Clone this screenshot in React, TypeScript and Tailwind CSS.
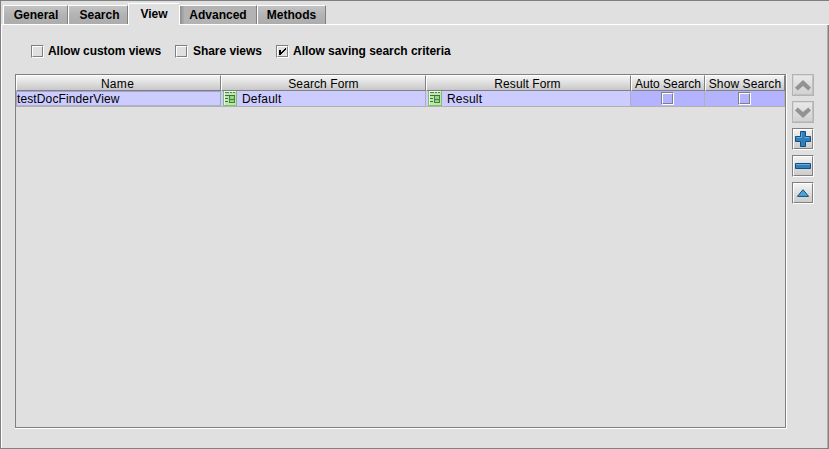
import React from "react";

function Check({ label, checked, className, gap }: { label: string; checked?: boolean; className: string; gap: string }) {
  return (
    <label className={`flex h-[14px] items-center whitespace-nowrap font-bold ${className}`}>
      <span className={`h-[13px] w-[13px] shrink-0 border border-t-[#808080] border-l-[#808080] border-r-white border-b-white ${gap}`}>
        <span className="block h-[11px] w-[11px] border border-t-white border-l-white border-r-[#808080] border-b-[#808080]">
          {checked && (
            <svg className="block" width="9" height="9" viewBox="0 0 9 9" shapeRendering="crispEdges">
              <path d="M1 3h2v2h1v-1h1v-1h1v-1h1v-1h1v2h-1v1h-1v1h-1v1h-1v1h-1v1h-2z" fill="#000" />
            </svg>
          )}
        </span>
      </span>
      <span>{label}</span>
    </label>
  );
}

function CellCheck() {
  return (
    <span className="block h-[13px] w-[13px] border border-t-[#808080] border-l-[#808080] border-r-white border-b-white">
      <span className="block h-[11px] w-[11px] border border-t-white border-l-white border-r-[#808080] border-b-[#808080]" />
    </span>
  );
}

function FormIcon() {
  return (
    <svg className="mr-[5px] ml-[2px] block shrink-0" width="14" height="15" viewBox="0 0 14 15" shapeRendering="crispEdges">
      <path d="M0 0h14v15H0z" fill="#86bd76" />
      <path d="M1 0h12v14H1z" fill="#b9eaa9" />
      <path d="M1 0h1v14H1zM1 0h12v1H1z" fill="#e6fbdf" />
      <path d="M2 1h4v1H2zM7 1h2v1H7zM10 1h2v1h-2z" fill="#5d7a58" />
      <path d="M2 4h10v1H2zM2 7h3v1H2zM2 10h3v1H2z" fill="#456d42" />
      <path d="M6 5h1v7H6zM11 5h1v7h-1zM6 8h6v1H6zM6 11h6v1H6z" fill="#478043" />
      <path d="M7 5h4v3H7zM7 9h4v2H7z" fill="#97d386" />
    </svg>
  );
}

function Tab({ label, className }: { label: string; className: string }) {
  return (
    <div className={`flex h-[19px] items-center justify-center border-t border-l border-t-white border-l-white border-r border-r-[#808080] font-bold ${className}`}>
      <span className="whitespace-nowrap">{label}</span>
    </div>
  );
}

function Head({ label, className }: { label: string; className: string }) {
  return (
    <div className={`flex h-[16px] items-center justify-center border-t border-r border-b border-l border-t-white border-l-white border-r-[#808080] border-b-[#808080] bg-linear-to-b from-[#f4f4f4] to-[#c8c8c8] pt-[2px] whitespace-nowrap ${className}`}>
      {label}
    </div>
  );
}

function Btn({ children, disabled }: { children: React.ReactNode; disabled?: boolean }) {
  return (
    <div
      className={
        disabled
          ? "h-[22px] w-[22px] border border-[#b3b3b3]"
          : "h-[22px] w-[22px] border border-t-[#808080] border-l-[#808080] border-r-white border-b-white"
      }
    >
      <div
        className={
          disabled
            ? "flex h-[20px] w-[20px] items-center justify-center border border-t-[#d8d8d8] border-l-[#d8d8d8] border-r-[#c0c0c0] border-b-[#c0c0c0] bg-linear-to-b from-[#e8e8e8] to-[#d2d2d2]"
            : "flex h-[20px] w-[20px] items-center justify-center border border-t-white border-l-white border-r-[#808080] border-b-[#808080] bg-linear-to-b from-[#f2f2f2] to-[#cccccc]"
        }
      >
        {children}
      </div>
    </div>
  );
}

export default function App() {
  return (
    <div className="flex h-[449px] w-[829px] flex-col overflow-hidden border-t border-b border-l border-[#808080] bg-[#e0e0e0] font-['Liberation_Sans',Arial,sans-serif] text-[12px] leading-[14px] text-black">
      <div className="flex h-[23px] items-end pl-[2px]">
        <Tab label="General" className="w-[65px] bg-linear-to-b from-[#c3c3c3] via-[#b3b3b3] to-[#acacac] pl-px" />
        <Tab label="Search" className="w-[60px] bg-linear-to-b from-[#c3c3c3] via-[#b3b3b3] to-[#acacac] pl-[3px]" />
        <div className="z-10 -mb-px flex h-[22px] w-[51px] items-center justify-center border-t border-l border-white bg-[#e0e0e0] pb-[2px] font-bold">
          View
        </div>
        <Tab label="Advanced" className="w-[78px] border-l-[#7c7c7c] bg-linear-to-r from-[#8c8c8c] via-[#b3b3b3] via-6% to-[#b3b3b3]" />
        <Tab label="Methods" className="w-[69px] bg-linear-to-b from-[#c3c3c3] via-[#b3b3b3] to-[#acacac]" />
      </div>
      <div className="flex flex-1 border-t border-l border-white">
        <div className="flex flex-1 flex-col border-r border-[#b0b0b0] pl-[13px]">
          <div className="mt-[19px] flex h-[14px] pl-[16px]">
            <Check label="Allow custom views" gap="mr-[4px]" className="w-[144px] tracking-[-0.05px]" />
            <Check label="Share views" gap="mr-[5px]" className="w-[101px] tracking-[-0.05px]" />
            <Check label="Allow saving search criteria" gap="mr-[4px]" checked className="w-[190px] tracking-[-0.04px]" />
          </div>
          <div className="mt-[16px] flex">
            <div className="h-[355px] w-[772px] border-r border-b border-white">
              <div className="h-[354px] w-[771px] border border-[#808080]">
                <div className="flex">
                  <Head label="Name" className="w-[205px] pr-[2px] tracking-[0.3px]" />
                  <Head label="Search Form" className="w-[205px] tracking-[0.1px]" />
                  <Head label="Result Form" className="w-[205px] pr-[2px] tracking-[0.1px]" />
                  <Head label="Auto Search" className="w-[74px]" />
                  <Head label="Show Search" className="w-[80px] tracking-[0.1px]" />
                </div>
                <div className="flex h-[16px] border-b border-[#b0b0b0] bg-[#ccccff]">
                  <div className="flex w-[205px] items-center border-t border-r border-b border-l border-[#a3a3cc] border-b-[#b0b0cc] whitespace-nowrap tracking-[0.12px]">
                    testDocFinderView
                  </div>
                  <div className="flex w-[205px] items-center border-r border-[#b0b0b0] tracking-[0.2px]">
                    <FormIcon />
                    Default
                  </div>
                  <div className="flex w-[205px] items-center border-r border-[#b0b0b0] tracking-[0.2px]">
                    <FormIcon />
                    Result
                  </div>
                  <div className="flex w-[74px] items-center justify-center border-r border-[#b0b0b0] bg-[#b3b3ff]">
                    <CellCheck />
                  </div>
                  <div className="flex w-[80px] items-center justify-center border-r border-[#b0b0b0] bg-[#b3b3ff]">
                    <CellCheck />
                  </div>
                </div>
              </div>
            </div>
            <div className="ml-[5px] flex flex-col gap-[5px]">
              <Btn disabled>
                <svg width="16" height="11" viewBox="0 0 16 11">
                  <path d="M8 0 16 7.5 13.3 10.5 8 6 2.7 10.5 0 7.5z" fill="#939393" />
                </svg>
              </Btn>
              <Btn disabled>
                <svg width="16" height="11" viewBox="0 0 16 11">
                  <path d="M8 11 16 3.5 13.3.5 8 5 2.7.5 0 3.5z" fill="#939393" />
                </svg>
              </Btn>
              <Btn>
                <svg width="16" height="16" viewBox="0 0 16 16">
                  <path d="M5.5.5h5v5h5v5h-5v5h-5v-5h-5v-5h5z" fill="#2e81bd" stroke="#174d76" />
                  <path d="M6.5 1.5v5h-5M9.5 6.5h5" fill="none" stroke="#64aee0" />
                </svg>
              </Btn>
              <Btn>
                <svg width="16" height="6" viewBox="0 0 16 6">
                  <path d="M.5.5h15v5H.5z" fill="#2e81bd" stroke="#174d76" />
                  <path d="M1 1.5h14" stroke="#64aee0" />
                </svg>
              </Btn>
              <Btn>
                <svg width="14" height="8" viewBox="0 0 14 8">
                  <path d="M7 .7 12.6 7.4H1.4z" fill="#4ba5dd" stroke="#174d76" />
                </svg>
              </Btn>
            </div>
          </div>
        </div>
        <div className="w-px bg-[#808080]" />
      </div>
    </div>
  );
}
